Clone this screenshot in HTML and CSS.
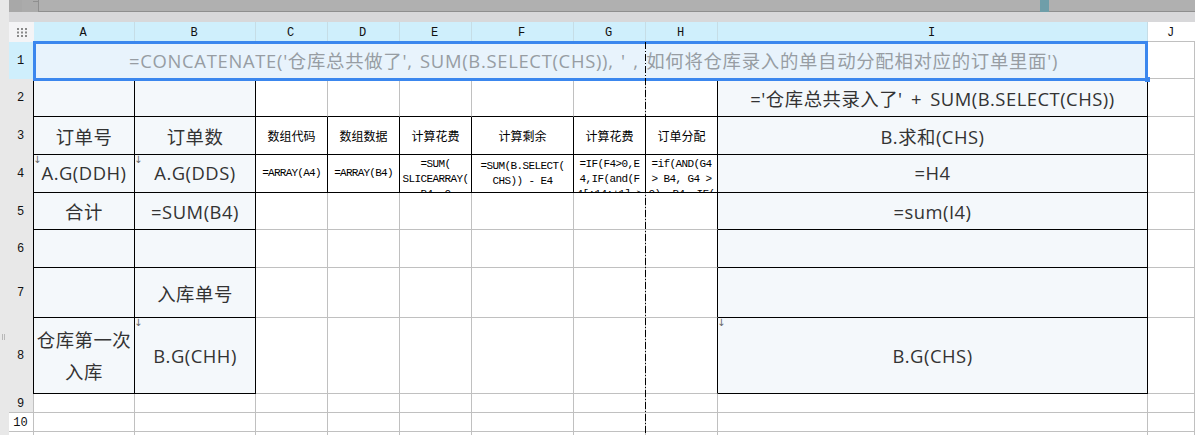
FILE: index.html
```html
<!DOCTYPE html>
<html lang="zh">
<head>
<meta charset="utf-8">
<title>Sheet</title>
<link rel="stylesheet" href="styles.css">
</head>
<body>
<div class="app">
  <div class="rail"><span class="grip"></span></div>
  <div class="main">
    <div class="topbar">
      <div class="tab-stub"><span class="notch"></span></div>
      <div class="tab-fill"></div>
      <div class="teal"></div>
      <div class="tab-end"></div>
    </div>
    <div class="band"></div>
    <div class="sheet">
      <div class="corner">
        <svg class="dots" width="10" height="9" viewBox="0 0 10 9"><path d="M0 0h2v2H0zM4 0h2v2H4zM8 0h2v2H8zM0 3.500h2v2H0zM4 3.500h2v2H4zM8 3.500h2v2H8zM0 7h2v2H0zM4 7h2v2H4zM8 7h2v2H8z" fill="#8a8a8a"/></svg>
      </div>
      <div class="ch on">A</div><div class="ch on">B</div><div class="ch on">C</div><div class="ch on">D</div><div class="ch on">E</div><div class="ch on">F</div><div class="ch on">G</div><div class="ch on">H</div><div class="ch on">I</div><div class="ch">J</div>

      <div class="rh sel">1</div>
      <div class="c merged">=CONCATENATE('仓库总共做了', SUM(B.SELECT(CHS)), ' , 如何将仓库录入的单自动分配相对应的订单里面')</div>
      <div class="c"></div>

      <div class="rh">2</div>
      <div class="c k t"></div><div class="c k t"></div>
      <div class="c gr"></div><div class="c gr"></div><div class="c gr"></div><div class="c gr"></div><div class="c gr"></div><div class="c gr kr"></div>
      <div class="c k t big">='仓库总共录入了' + SUM(B.SELECT(CHS))</div>
      <div class="c"></div>

      <div class="rh">3</div>
      <div class="c k t big">订单号</div><div class="c k t big">订单数</div>
      <div class="c k sm">数组代码</div><div class="c k sm">数组数据</div><div class="c k sm">计算花费</div><div class="c k sm">计算剩余</div><div class="c k sm">计算花费</div><div class="c k sm">订单分配</div>
      <div class="c k t big">B.求和(CHS)</div>
      <div class="c"></div>

      <div class="rh">4</div>
      <div class="c k t big lift"><span class="arrow">↓</span>A.G(DDH)</div>
      <div class="c k t big lift"><span class="arrow">↓</span>A.G(DDS)</div>
      <div class="c k code one">=ARRAY(A4)</div>
      <div class="c k code one">=ARRAY(B4)</div>
      <div class="c k code top">=SUM(<br>SLICEARRAY(<br>B4, 0</div>
      <div class="c k code">=SUM(B.SELECT(<br>CHS)) - E4</div>
      <div class="c k code top">=IF(F4&gt;0,E<br>4,IF(and(F<br>4[:14:+1] &gt;</div>
      <div class="c k code top">=if(AND(G4<br>&gt; B4, G4 &gt;<br>0), B4, IF(</div>
      <div class="c k t big lift">=H4</div>
      <div class="c"></div>

      <div class="rh">5</div>
      <div class="c k t big">合计</div><div class="c k t big">=SUM(B4)</div>
      <div class="c"></div><div class="c"></div><div class="c"></div><div class="c"></div><div class="c"></div><div class="c kr"></div>
      <div class="c k t big">=sum(I4)</div>
      <div class="c"></div>

      <div class="rh">6</div>
      <div class="c k t"></div><div class="c k t"></div>
      <div class="c"></div><div class="c"></div><div class="c"></div><div class="c"></div><div class="c"></div><div class="c kr"></div>
      <div class="c k t"></div>
      <div class="c"></div>

      <div class="rh">7</div>
      <div class="c k t"></div><div class="c k t big">入库单号</div>
      <div class="c"></div><div class="c"></div><div class="c"></div><div class="c"></div><div class="c"></div><div class="c kr"></div>
      <div class="c k t"></div>
      <div class="c"></div>

      <div class="rh">8</div>
      <div class="c k t big wrap">仓库第一次<br>入库</div>
      <div class="c k t big"><span class="arrow">↓</span>B.G(CHH)</div>
      <div class="c"></div><div class="c"></div><div class="c"></div><div class="c"></div><div class="c"></div><div class="c kr"></div>
      <div class="c k t big"><span class="arrow">↓</span>B.G(CHS)</div>
      <div class="c"></div>

      <div class="rh plain">9</div>
      <div class="c"></div><div class="c"></div><div class="c"></div><div class="c"></div><div class="c"></div><div class="c"></div><div class="c"></div><div class="c"></div><div class="c"></div><div class="c"></div>

      <div class="rh plain white">10</div>
      <div class="c"></div><div class="c"></div><div class="c"></div><div class="c"></div><div class="c"></div><div class="c"></div><div class="c"></div><div class="c"></div><div class="c"></div><div class="c"></div>

      <div class="rh plain white"></div>
      <div class="c"></div><div class="c"></div><div class="c"></div><div class="c"></div><div class="c"></div><div class="c"></div><div class="c"></div><div class="c"></div><div class="c"></div><div class="c"></div>

      <div class="selection"><span class="handle"></span></div>
      <div class="freeze"></div>
    </div>
  </div>
</div>
</body>
</html>
```
FILE: styles.css
```css
html, body {
  margin: 0;
  padding: 0;
  width: 1195px;
  height: 435px;
  overflow: hidden;
  background: #fff;
}

.app {
  display: flex;
  width: 1195px;
  height: 435px;
  overflow: hidden;
}

.rail {
  flex: 0 0 9px;
  background: #e8e8e8;
  position: relative;
}

.grip {
  position: absolute;
  left: 2px;
  top: 334px;
  width: 1px;
  height: 6px;
  border-left: 1px solid #b8b8b8;
  border-right: 1px solid #b8b8b8;
}

.main {
  flex: 1;
  min-width: 0;
  display: flex;
  flex-direction: column;
}

.topbar {
  display: flex;
  flex: 0 0 12px;
  background: #b0b0b0;
}

.tab-stub {
  flex: 0 0 29px;
  position: relative;
  background: linear-gradient(90deg, #a8a8a8 0 13px, #ababab 13px);
  border-right: 1px solid #8f8f8f;
}

.notch {
  position: absolute;
  left: 24px;
  top: 1px;
  width: 5px;
  height: 1px;
  background: #8f8f8f;
}

.tab-fill {
  flex: 1;
  border-bottom: 1px solid #8f8f8f;
}

.teal {
  flex: 0 0 9px;
  background: #6f9ea9;
}

.tab-end {
  flex: 0 0 146px;
  border-bottom: 1px solid #8f8f8f;
}

.band {
  flex: 0 0 10px;
  background: #d8d8da;
}

.sheet {
  position: relative;
  flex: 0 0 auto;
  display: grid;
  grid-template-columns: 25px 101px 121px 72px 72px 72px 102px 72px 72px 430px 1fr;
  grid-template-rows: 20px 37px 38px 38px 38px 37px 38px 50px 76px 19px 19px 19px;
  font-family: "Open Sans", "Noto Sans CJK SC", sans-serif;
  color: #333;
}

.corner {
  background: #f4f4f6;
  display: flex;
  align-items: center;
  justify-content: center;
  padding-left: 1px;
}

.ch {
  box-sizing: border-box;
  background: #fff;
  border-bottom: 1px solid #c0c0c0;
  font: 12px "Liberation Mono", monospace;
  color: #111;
  display: flex;
  align-items: center;
  justify-content: center;
  padding: 2px 2px 0 0;
}

.ch.on {
  background: #cfeffc;
  border-right: 1px solid #c6dde6;
  border-bottom: 0;
}

.rh {
  box-sizing: border-box;
  background: #e8e8e8;
  border-right: 1px solid #000;
  font: 12px "Liberation Mono", monospace;
  color: #111;
  display: flex;
  align-items: center;
  justify-content: center;
  padding-right: 1px;
}

.rh.sel {
  background: #cfeffc;
}

.rh.plain {
  border-right: 1px solid #c0c0c0;
  border-bottom: 1px solid #c0c0c0;
  padding-top: 1px;
}

.rh.white {
  background: #fff;
}

.c {
  box-sizing: border-box;
  position: relative;
  min-width: 0;
  overflow: hidden;
  background: #fff;
  border-right: 1px solid #c0c0c0;
  border-bottom: 1px solid #c0c0c0;
  display: flex;
  align-items: center;
  justify-content: center;
  text-align: center;
  white-space: nowrap;
}

.merged {
  grid-column: span 9;
  background: #e8f3fc;
  color: #979da3;
  font-size: 18.4px;
  letter-spacing: 0.7px;
  word-spacing: 2px;
  padding-left: 6px;
}

.k {
  border-right-color: #000;
  border-bottom-color: #000;
}

.gr {
  border-bottom-color: #000;
}

.kr {
  border-right-color: #000;
}

.t {
  background: #f4f8fb;
}

.big {
  font-size: 18.4px;
  letter-spacing: 0.5px;
  word-spacing: 3px;
}

.lift {
  padding-bottom: 3px;
}

.wrap {
  line-height: 32px;
}

.sm {
  font-size: 12px;
  color: #000;
}

.code {
  font: 11px/15px "Liberation Mono", monospace;
  letter-spacing: -0.6px;
  color: #000;
}

.one {
  letter-spacing: -0.75px;
}

.top {
  align-items: flex-start;
  padding-top: 2px;
}

.arrow {
  position: absolute;
  left: -1px;
  top: -1px;
  font: 10px/12px "DejaVu Sans", sans-serif;
  color: #666;
}

.selection {
  position: absolute;
  left: 24px;
  top: 19px;
  width: 1115px;
  height: 40px;
  box-sizing: border-box;
  border: 3px solid #3b87ee;
  pointer-events: none;
}

.handle {
  position: absolute;
  right: -5px;
  bottom: -4px;
  width: 5px;
  height: 5px;
  background: #3b87ee;
}

.freeze {
  position: absolute;
  left: 636px;
  top: 20px;
  bottom: 0;
  width: 1px;
  background: repeating-linear-gradient(180deg, #000 0 7px, transparent 7px 9px, #000 9px 10px, transparent 10px 12px);
}
```
